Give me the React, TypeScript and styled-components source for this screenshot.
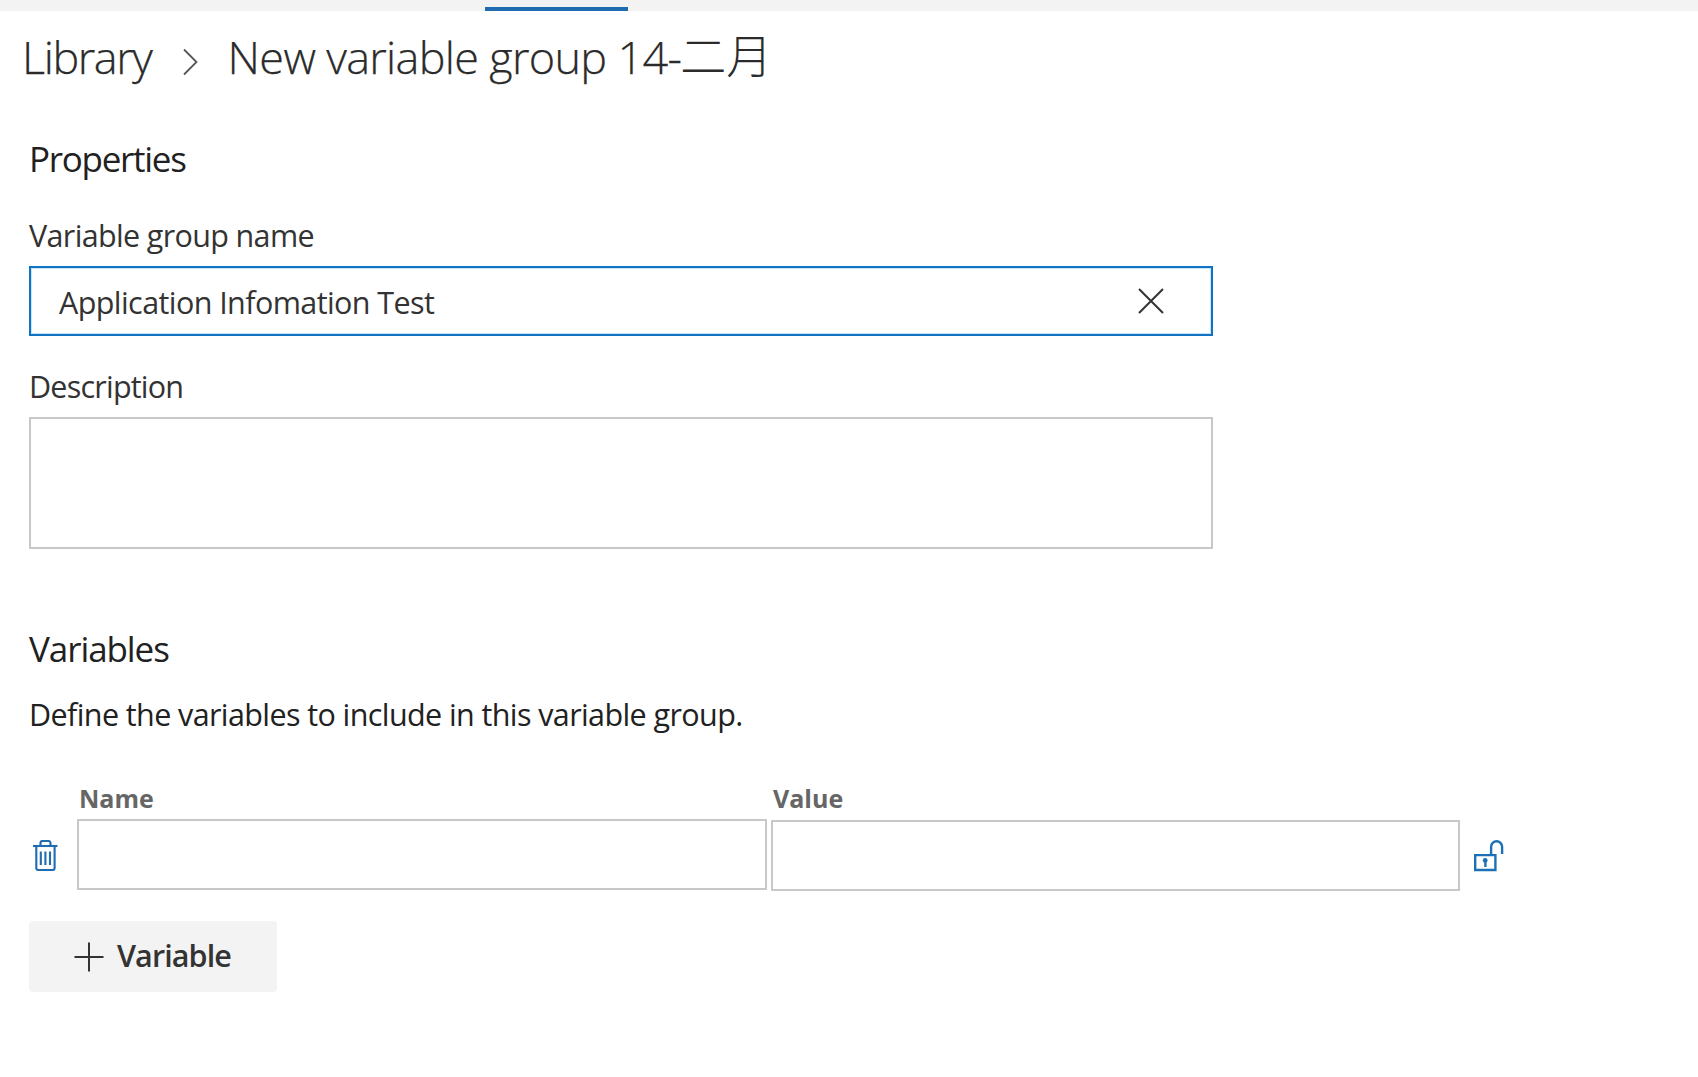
import React, { useState } from "react";
import styled, { createGlobalStyle } from "styled-components";

const Global = createGlobalStyle`
  * { box-sizing: border-box; }
  body {
    margin: 0;
    background: #fff;
    color: #212121;
    font-family: "Open Sans", "Noto Sans", "Noto Sans CJK SC", sans-serif;
  }
`;

const Page = styled.div`
  display: flex;
  flex-direction: column;
  min-height: 1077px;
  background: #fff;
`;

const HubBar = styled.div`
  display: flex;
  align-items: flex-end;
  height: 11px;
  padding-left: 485px;
  background: #f3f3f3;
`;

const ActiveTab = styled.div`
  width: 143px;
  height: 4px;
  background: #1f6cb0;
`;

const Breadcrumb = styled.nav`
  display: flex;
  align-items: center;
  height: 60px;
  margin-top: 16px;
  padding-left: 22px;
  color: #2b2b2b;
`;

const Crumb = styled.span<{ $spacing: number }>`
  font-size: 45px;
  font-weight: 300;
  line-height: 60px;
  letter-spacing: ${(p) => p.$spacing}px;
  white-space: nowrap;
  -webkit-text-stroke: 0.25px currentColor;
`;

const CrumbSuffix = styled.span`
  margin: 0 0 9px -1px;
  font-family: "Noto Sans CJK SC", sans-serif;
  font-size: 46px;
  font-weight: 300;
  line-height: 60px;
`;

const ChevronIcon = styled.svg`
  width: 16px;
  height: 28px;
  margin: 9px 29px 0 31px;
`;

const Content = styled.main`
  display: flex;
  flex-direction: column;
  align-items: flex-start;
  padding: 52px 0 0 29px;
`;

const Heading = styled.h2<{ $spacing: number }>`
  margin: 0;
  font-size: 35px;
  font-weight: 400;
  line-height: 40px;
  letter-spacing: ${(p) => p.$spacing}px;
`;

const Field = styled.div<{ $gap: number }>`
  display: flex;
  flex-direction: column;
  gap: 11px;
  width: 1184px;
  margin-top: ${(p) => p.$gap}px;
`;

const Label = styled.label<{ $spacing: number }>`
  color: #333;
  font-size: 30.5px;
  line-height: 40px;
  letter-spacing: ${(p) => p.$spacing}px;
`;

const NameBox = styled.div`
  display: flex;
  align-items: center;
  height: 70px;
  padding: 0 47px 0 28px;
  border: 2px solid #1272c2;
  box-shadow: inset 0 0 0 1px #c6e7fa;
`;

const NameInput = styled.input`
  flex: 1;
  min-width: 0;
  height: 60px;
  padding: 2px 0 0;
  border: 0;
  outline: 0;
  background: transparent;
  color: #333;
  font: 400 30.5px "Open Sans", "Noto Sans", sans-serif;
  letter-spacing: -0.58px;
`;

const ClearButton = styled.button`
  display: flex;
  margin-top: 0;
  padding: 0;
  border: 0;
  background: none;
`;

const Description = styled.textarea`
  display: block;
  height: 132px;
  padding: 12px 29px;
  border: 2px solid #c8c8c8;
  outline: 0;
  resize: none;
  font: 400 30.5px "Open Sans", "Noto Sans", sans-serif;
`;

const VariablesSection = styled.section`
  display: flex;
  flex-direction: column;
  align-items: flex-start;
  margin-top: 80px;
`;

const Hint = styled.p`
  margin: 25px 0 0;
  font-size: 30.5px;
  line-height: 40px;
  letter-spacing: -0.6px;
`;

const Grid = styled.div`
  display: grid;
  grid-template-columns: 48px 690px 4px 689px auto;
  grid-template-rows: 36px 72px;
  margin-top: 49px;
`;

const ColumnTitle = styled.div<{ $column: number; $spacing: number }>`
  grid-column: ${(p) => p.$column};
  grid-row: 1;
  padding-left: 2px;
  color: #666;
  font-size: 25px;
  font-weight: 700;
  line-height: 30px;
  letter-spacing: ${(p) => p.$spacing}px;
`;

const CellInput = styled.input<{ $column: number; $drop: number }>`
  grid-column: ${(p) => p.$column};
  grid-row: 2;
  width: 100%;
  min-width: 0;
  height: 71px;
  margin: ${(p) => p.$drop}px 0 0;
  padding: 0 20px;
  border: 2px solid #c8c8c8;
  outline: 0;
  font: 400 30.5px "Open Sans", "Noto Sans", sans-serif;
`;

const IconCell = styled.button<{ $column: number; $left: number }>`
  display: flex;
  grid-column: ${(p) => p.$column};
  grid-row: 2;
  align-self: start;
  margin: 21px 0 0 ${(p) => p.$left}px;
  padding: 0;
  border: 0;
  background: none;
`;

const AddButton = styled.button`
  display: flex;
  align-items: center;
  gap: 13px;
  width: 248px;
  height: 71px;
  margin-top: 30px;
  padding: 0 0 0 45px;
  border: 0;
  border-radius: 4px;
  background: #f3f3f3;
  color: #333;
`;

const AddLabel = styled.span`
  margin-bottom: 3px;
  font: 600 30.5px/40px "Open Sans", "Noto Sans", sans-serif;
  letter-spacing: -0.9px;
`;

function TrashIcon() {
  return (
    <svg width="26" height="32" viewBox="0 0 26 32" fill="none" stroke="#1f6cb0" strokeWidth="2.1">
      <path d="M0 6H24.5" />
      <path d="M7.5 6V3Q7.5 1 9.5 1H15.5Q17.5 1 17.5 3V6" />
      <path d="M3.3 6V28Q3.3 30 5.3 30H19.6Q21.6 30 21.6 28V6" />
      <path d="M7.8 11.5V25M12.4 11.5V25M17 11.5V25" />
    </svg>
  );
}

function UnlockIcon() {
  return (
    <svg width="30" height="32" viewBox="0 0 30 32" fill="none" stroke="#1c70b5" strokeWidth="2.4">
      <path d="M1.2 15.1H21.4V30H1.2Z" />
      <path d="M17.1 15V6.8A5.5 5.5 0 0 1 28.1 6.8V14" />
      <circle cx="11.2" cy="20.4" r="2.4" fill="#1c70b5" stroke="none" />
      <path d="M11.4 20V27" />
    </svg>
  );
}

export default function App() {
  const [name, setName] = useState("Application Infomation Test");
  return (
    <Page>
      <Global />
      <HubBar>
        <ActiveTab />
      </HubBar>
      <Breadcrumb>
        <Crumb $spacing={-1.42}>Library</Crumb>
        <ChevronIcon viewBox="0 0 16 28" fill="none" stroke="#555" strokeWidth="1.8">
          <path d="M1 1.5L13.5 14L1 26.5" />
        </ChevronIcon>
        <Crumb $spacing={-0.7}>New variable group 14-</Crumb>
        <CrumbSuffix>二月</CrumbSuffix>
      </Breadcrumb>
      <Content>
        <Heading $spacing={-1.28}>Properties</Heading>
        <Field $gap={36}>
          <Label $spacing={-0.65}>Variable group name</Label>
          <NameBox>
            <NameInput value={name} onChange={(e) => setName(e.target.value)} />
            <ClearButton aria-label="Clear">
              <svg width="26" height="26" viewBox="0 0 26 26" fill="none" stroke="#333" strokeWidth="2">
                <path d="M1 1L25 25M25 1L1 25" />
              </svg>
            </ClearButton>
          </NameBox>
        </Field>
        <Field $gap={30}>
          <Label $spacing={-0.78}>Description</Label>
          <Description />
        </Field>
        <VariablesSection>
          <Heading $spacing={-1.08}>Variables</Heading>
          <Hint>Define the variables to include in this variable group.</Hint>
          <Grid>
            <ColumnTitle $column={2} $spacing={0}>Name</ColumnTitle>
            <ColumnTitle $column={4} $spacing={0}>Value</ColumnTitle>
            <IconCell $column={1} $left={4} aria-label="Delete variable">
              <TrashIcon />
            </IconCell>
            <CellInput $column={2} $drop={0} />
            <CellInput $column={4} $drop={1} />
            <IconCell $column={5} $left={14} aria-label="Make secret">
              <UnlockIcon />
            </IconCell>
          </Grid>
          <AddButton>
            <svg width="30" height="30" viewBox="0 0 30 30" fill="none" stroke="#333" strokeWidth="2">
              <path d="M0.5 15H29.5M15 0.5V29.5" />
            </svg>
            <AddLabel>Variable</AddLabel>
          </AddButton>
        </VariablesSection>
      </Content>
    </Page>
  );
}
